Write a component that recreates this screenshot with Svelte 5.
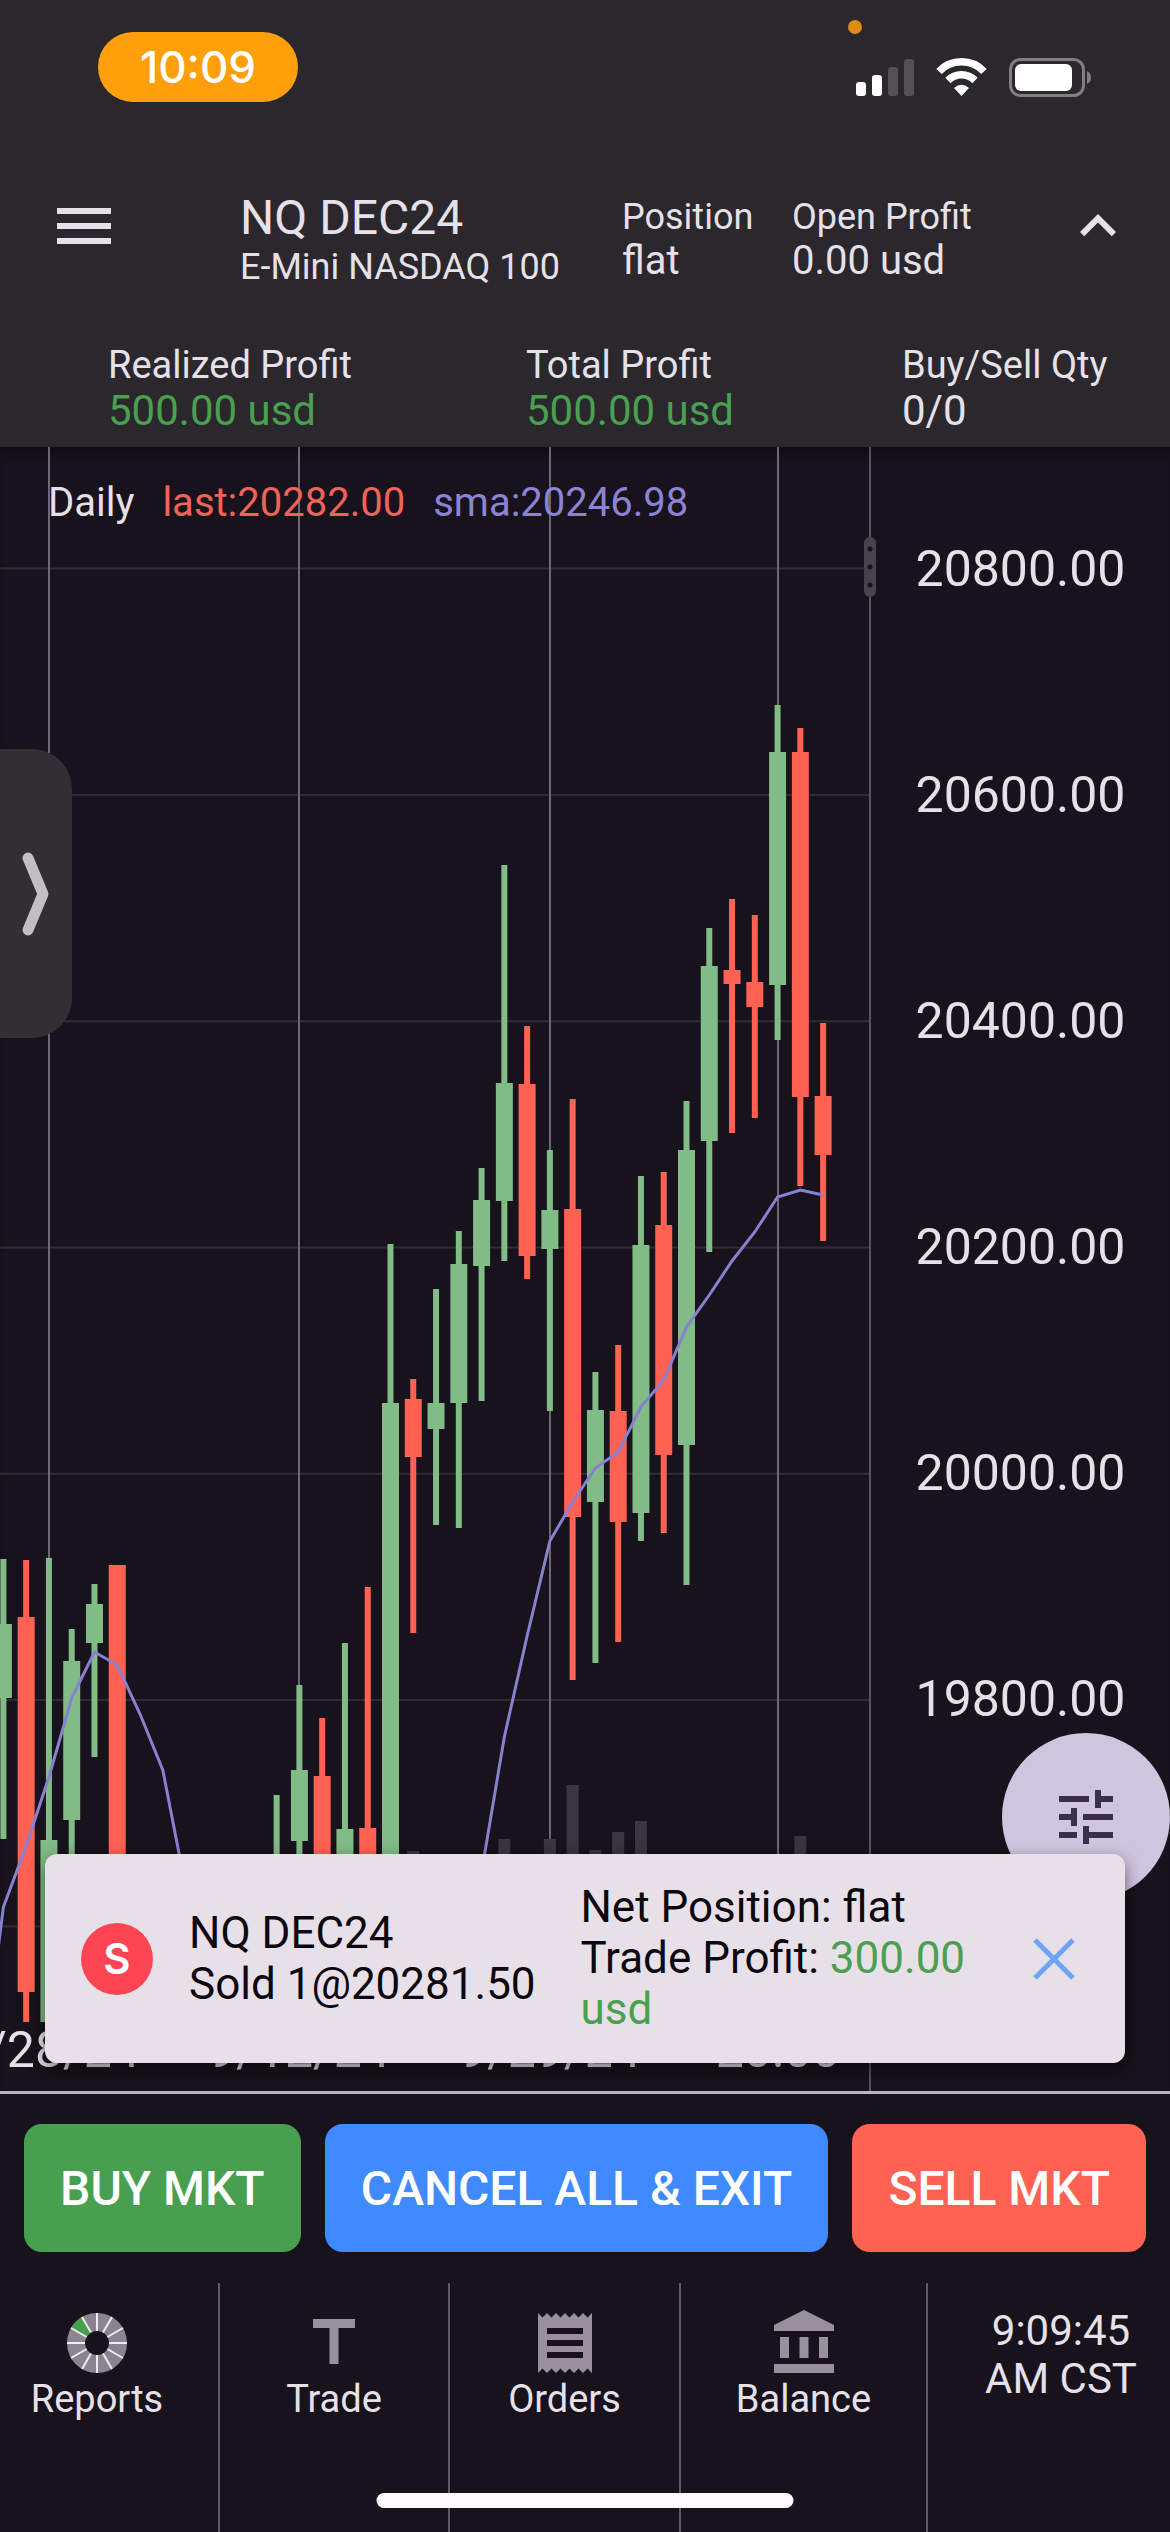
<script>
  let showTrade = true;
  let active = "Trade";

  const prices = [
    "20800.00",
    "20600.00",
    "20400.00",
    "20200.00",
    "20000.00",
    "19800.00",
  ];

  const dates = [
    { x: 49, label: "8/28/24" },
    { x: 299, label: "9/12/24" },
    { x: 550, label: "9/29/24" },
    { x: 778, label: "20:00" },
  ];

  // chart space: one bar every 22.77 units, 200 points every 226.3 units
  const barX = (i) => 3.4 + i * 22.77;
  const rows = [0, 1, 2, 3, 4, 5, 6].map((n) => 121.6 + n * 226.3);

  // [bar, up, high, body top, body bottom, low]
  const candles = [
    [0, 1, 1112, 1177, 1251, 1392],
    [1, 0, 1113, 1170, 1545, 1575],
    [2, 1, 1111, 1393, 1575, 1575],
    [3, 1, 1182, 1214, 1373, 1450],
    [4, 1, 1137, 1157, 1196, 1310],
    [5, 0, 1118, 1118, 1550, 1550],
    [12, 1, 1348, 1430, 1500, 1550],
    [13, 1, 1238, 1323, 1394, 1450],
    [14, 0, 1271, 1329, 1480, 1520],
    [15, 1, 1196, 1382, 1480, 1520],
    [16, 0, 1140, 1381, 1480, 1520],
    [17, 1, 797, 956, 1480, 1520],
    [18, 0, 932, 952, 1010, 1186],
    [19, 1, 842, 956, 982, 1078],
    [20, 1, 784, 817, 956, 1081],
    [21, 1, 721, 753, 819, 954],
    [22, 1, 418, 636, 754, 814],
    [23, 0, 579, 637, 809, 832],
    [24, 1, 703, 763, 802, 964],
    [25, 0, 652, 762, 1070, 1233],
    [26, 1, 925, 963, 1055, 1216],
    [27, 0, 898, 964, 1075, 1195],
    [28, 1, 729, 798, 1066, 1094],
    [29, 0, 725, 778, 1008, 1086],
    [30, 1, 654, 703, 998, 1138],
    [31, 1, 481, 519, 694, 805],
    [32, 0, 452, 523, 537, 686],
    [33, 0, 468, 535, 560, 671],
    [34, 1, 258, 305, 538, 593],
    [35, 0, 281, 305, 650, 739],
    [36, 0, 576, 649, 708, 794],
  ];

  // [bar, top]
  const volumes = [
    [18, 1404],
    [22, 1392],
    [24, 1392],
    [25, 1338],
    [26, 1403],
    [27, 1385],
    [28, 1374],
    [35, 1389],
  ];

  const sma = [
    [-1, 1640],
    [0, 1460],
    [1, 1399],
    [2, 1330],
    [3, 1251],
    [4, 1205],
    [5, 1218],
    [6, 1267],
    [7, 1323],
    [8, 1440],
    [9, 1540],
    [20, 1540],
    [21, 1425],
    [22, 1290],
    [23, 1189],
    [24, 1094],
    [25, 1055],
    [26, 1021],
    [27, 1005],
    [28, 960],
    [29, 933],
    [30, 880],
    [31, 848],
    [32, 814],
    [33, 785],
    [34, 750],
    [35, 743],
    [36, 748],
  ];
  const smaPoints = sma.map(([i, y]) => `${barX(i)},${y}`).join(" ");

  const spokes = [0, 30, 60, 90, 120, 150, 180, 210, 240, 270, 300, 330];
</script>

<div class="app">
  <header>
    <div class="status">
      <span class="clock">10:09</span>
      <i class="rec-dot"></i>
      <svg class="signals" viewBox="0 0 236 40">
        <g fill="#fff">
          <rect x="0" y="24" width="10" height="14" rx="3" />
          <rect x="16" y="17" width="10" height="21" rx="3" />
        </g>
        <g fill="#545057">
          <rect x="32" y="9" width="10" height="29" rx="3" />
          <rect x="48" y="1" width="10" height="37" rx="3" />
        </g>
        <g fill="none" stroke="#fff" stroke-width="7.5">
          <path d="M83 13.500a31 31 0 0 1 45 0" />
          <path d="M92 22.500a19 19 0 0 1 27 0" />
        </g>
        <path d="M98 30q7.500-6.500 15 0l-7.500 8z" fill="#fff" />
        <rect
          x="154.500"
          y="1.500"
          width="73"
          height="36"
          rx="10"
          fill="none"
          stroke="#807d83"
          stroke-width="3"
        />
        <rect x="159" y="6" width="57" height="27" rx="6" fill="#fff" />
        <path d="M231 13q4 2 4 6.500t-4 6.500z" fill="#807d83" />
      </svg>
    </div>

    <div class="top-row">
      <button class="icon-button" aria-label="Menu">
        <svg viewBox="0 0 24 24"
          ><path d="M3 18h18v-2H3v2zm0-5h18v-2H3v2zm0-7v2h18V6H3z" /></svg
        >
      </button>
      <div>
        <h1>NQ DEC24</h1>
        <p class="sub">E-Mini NASDAQ 100</p>
      </div>
      <dl class="stat">
        <dt>Position</dt>
        <dd>flat</dd>
      </dl>
      <dl class="stat">
        <dt>Open Profit</dt>
        <dd>0.00 usd</dd>
      </dl>
      <button class="icon-button" aria-label="Collapse">
        <svg viewBox="0 0 24 24"
          ><path d="M12 8l-6 6 1.410 1.410L12 10.830l4.590 4.580L18 14z" /></svg
        >
      </button>
    </div>

    <div class="profit-row">
      <dl>
        <dt>Realized Profit</dt>
        <dd class="gain">500.00 usd</dd>
      </dl>
      <dl>
        <dt>Total Profit</dt>
        <dd class="gain">500.00 usd</dd>
      </dl>
      <dl>
        <dt>Buy/Sell Qty</dt>
        <dd>0/0</dd>
      </dl>
    </div>
  </header>

  <main>
    <div class="plot">
      <svg viewBox="0 0 869 1644" preserveAspectRatio="xMaxYMin slice">
        {#each rows as y}
          <line x1="0" x2="869" y1={y} y2={y} stroke="#302c34" stroke-width="2" />
        {/each}
        {#each dates as d}
          <line x1={d.x} x2={d.x} y1="0" y2="1575" stroke="#6d6872" stroke-width="2" />
        {/each}
        {#each volumes as [i, y]}
          <rect x={barX(i) - 6} {y} width="12" height={1575 - y} fill="#3a353f" />
        {/each}
        {#each candles as [i, up, high, top, bottom, low]}
          <g fill={up ? "#81bb86" : "#ff6253"}>
            <rect x={barX(i) - 3} y={high} width="6" height={low - high} />
            <rect x={barX(i) - 8.5} y={top} width="17" height={bottom - top} />
          </g>
        {/each}
        <polyline
          points={smaPoints}
          fill="none"
          stroke="#8880d0"
          stroke-width="3"
        />
        {#each dates as d}
          <text x={d.x} y="1620" text-anchor="middle">{d.label}</text>
        {/each}
      </svg>
    </div>

    <div class="axis">
      <i class="grip"></i>
      <ol>
        {#each prices as price}
          <li>{price}</li>
        {/each}
      </ol>
    </div>

    <p class="legend">
      <span>Daily</span>
      <span class="last">last:20282.00</span>
      <span class="sma">sma:20246.98</span>
    </p>

    <button class="drawer" aria-label="Open panel">
      <svg viewBox="0 0 72 90"
        ><path
          d="M28 9l15 36-15 36"
          fill="none"
          stroke="#c1bfc4"
          stroke-width="11"
          stroke-linecap="round"
          stroke-linejoin="round"
        /></svg
      >
    </button>

    <button class="fab" aria-label="Chart settings">
      <svg viewBox="0 0 24 24"
        ><path
          d="M3 17v2h6v-2H3zM3 5v2h10V5H3zm10 16v-2h8v-2h-8v-2h-2v6h2zM7 9v2H3v2h4v2h2V9H7zm14 4v-2H11v2h10zm-6-4h2V7h4V5h-4V3h-2v6z"
        /></svg
      >
    </button>

    {#if showTrade}
      <div class="toast">
        <span class="side">S</span>
        <p>NQ DEC24<br />Sold 1@20281.50</p>
        <p>
          Net Position: flat<br />Trade Profit:
          <span class="gain">300.00 usd</span>
        </p>
        <button
          class="close"
          aria-label="Close"
          on:click={() => (showTrade = false)}
        >
          <svg viewBox="0 0 72 72"
            ><path
              d="M17 17l38 38M55 17L17 55"
              fill="none"
              stroke="#6ea3f8"
              stroke-width="5"
            /></svg
          >
        </button>
      </div>
    {/if}
  </main>

  <div class="actions">
    <button class="buy">BUY MKT</button>
    <button class="cancel">CANCEL ALL &amp; EXIT</button>
    <button class="sell">SELL MKT</button>
  </div>

  <nav>
    <button class="first" on:click={() => (active = "Reports")}>
      <svg viewBox="0 0 72 72">
        <circle cx="36" cy="36" r="21" fill="none" stroke="#8a848e" stroke-width="18" />
        <path d="M10 21A30 30 0 0 1 21 10l9 15.600A12 12 0 0 0 25.600 30z" fill="#46a04d" />
        {#each spokes as angle}
          <line
            x1="36"
            x2="36"
            y1="6"
            y2="24"
            stroke="#f0ebf2"
            stroke-width="2"
            transform="rotate({angle} 36 36)"
          />
        {/each}
      </svg>
      Reports
    </button>
    <button on:click={() => (active = "Trade")}>
      <svg viewBox="0 0 24 24">
        <rect x="5" y="4" width="14" height="3" />
        <rect x="10.500" y="7" width="3" height="12" />
      </svg>
      Trade
    </button>
    <button on:click={() => (active = "Orders")}>
      <svg viewBox="0 0 24 24"
        ><path
          d="M18 17H6v-2h12v2zm0-4H6v-2h12v2zm0-4H6V7h12v2zM3 22l1.500-1.500L6 22l1.500-1.500L9 22l1.500-1.500L12 22l1.500-1.500L15 22l1.500-1.500L18 22l1.500-1.500L21 22V2l-1.500 1.500L18 2l-1.500 1.500L15 2l-1.500 1.500L12 2l-1.500 1.500L9 2 7.500 3.500 6 2 4.500 3.500 3 2v20z"
        /></svg
      >
      Orders
    </button>
    <button on:click={() => (active = "Balance")}>
      <svg viewBox="0 0 24 24"
        ><path
          d="M4 10h3v7H4zM10.500 10h3v7h-3zM17 10h3v7h-3zM2 19h20v3H2zM12 1L2 6v2h20V6z"
        /></svg
      >
      Balance
    </button>
    <time>9:09:45<br />AM CST</time>
    <i class="home-bar"></i>
  </nav>
</div>

<style>
  :global(body) {
    margin: 0;
    background: #17121b;
  }

  .app {
    display: flex;
    flex-direction: column;
    min-height: 100vh;
    color: #e6e0e9;
    font-family: Roboto, "Liberation Sans", sans-serif;
    background: #17121b;
  }

  h1,
  p,
  dl,
  dd,
  ol {
    margin: 0;
    padding: 0;
  }

  button {
    padding: 0;
    border: none;
    color: inherit;
    font-family: inherit;
    background: none;
    cursor: pointer;
  }

  svg {
    display: block;
    fill: currentColor;
  }

  header {
    background: #2a272d;
  }

  .status {
    position: relative;
    display: flex;
    justify-content: space-between;
    align-items: flex-end;
    padding: 32px 78px 88px 98px;
  }

  .clock {
    width: 200px;
    border-radius: 35px;
    color: #fff;
    font-family: Inter, sans-serif;
    font-size: 44px;
    font-weight: 500;
    line-height: 70px;
    text-align: center;
    background: #ffa00a;
  }

  .rec-dot {
    position: absolute;
    top: 20px;
    right: 308px;
    width: 14px;
    height: 14px;
    border-radius: 50%;
    background: #df8b15;
  }

  .signals {
    width: 236px;
    height: 40px;
    margin-bottom: 4px;
  }

  .top-row {
    display: grid;
    grid-template-columns: 192px 382fr 170fr 270fr 72px;
    align-items: center;
    padding: 0 36px 0 48px;
  }

  .icon-button {
    align-self: start;
    width: 72px;
    height: 72px;
  }

  h1 {
    font-size: 48px;
    font-weight: 400;
    line-height: 56px;
  }

  .sub {
    font-size: 36px;
    line-height: 42px;
  }

  .stat dt {
    font-size: 36px;
    line-height: 44px;
  }

  .stat dd {
    font-size: 40px;
    line-height: 44px;
  }

  .profit-row {
    display: grid;
    grid-template-columns: 418fr 376fr 268fr;
    padding: 55px 0 12px 108px;
  }

  .profit-row dt {
    font-size: 38px;
    line-height: 44px;
  }

  .profit-row dd {
    font-size: 42px;
    line-height: 48px;
  }

  .gain {
    color: #4b9f50;
  }

  main {
    position: relative;
    display: grid;
    grid-template-columns: 1fr 301px;
    flex: 1;
    border-bottom: 3px solid #bbb3be;
    box-shadow: inset 0 10px 12px -8px #0c090e;
  }

  .plot {
    display: flex;
    min-height: 900px;
    overflow: hidden;
  }

  .plot svg {
    flex: 1;
    min-width: 0;
    height: 100%;
  }

  .plot text {
    font-size: 50px;
  }

  .axis {
    position: relative;
    border-left: 2px solid #57525c;
  }

  ol {
    padding-top: 9px;
    list-style: none;
    font-size: 50px;
    line-height: 226px;
    text-align: center;
  }

  .grip {
    position: absolute;
    top: 90px;
    left: -7px;
    width: 12px;
    height: 60px;
    border-radius: 6px;
    background: radial-gradient(circle, #17121b 2px, #48434b 3px) 0 3px / 12px 18px;
  }

  .legend {
    position: absolute;
    top: 34px;
    left: 48px;
    display: flex;
    gap: 28px;
    font-size: 40px;
    line-height: 44px;
  }

  .last {
    color: #f0625a;
  }

  .sma {
    color: #8b83d6;
  }

  .drawer {
    position: absolute;
    top: 302px;
    left: 0;
    width: 72px;
    height: 289px;
    border-radius: 0 40px 40px 0;
    background: #312f33;
  }

  .fab {
    position: absolute;
    right: 0;
    bottom: 190px;
    display: grid;
    place-items: center;
    width: 168px;
    height: 168px;
    border-radius: 50%;
    color: #3a2f4c;
    background: #cec5de;
  }

  .fab svg {
    width: 72px;
  }

  .toast {
    position: absolute;
    right: 45px;
    bottom: 28px;
    left: 45px;
    display: grid;
    grid-template-columns: 108px 17fr 19fr 72px;
    align-items: center;
    padding: 28px 35px 28px 36px;
    border-radius: 12px;
    color: #0d0810;
    font-size: 44px;
    line-height: 51px;
    background: #e8e0e9;
    box-shadow: 0 6px 16px rgba(0, 0, 0, 0.5);
  }

  .side {
    width: 72px;
    border-radius: 50%;
    color: #fff;
    font-family: Inter, sans-serif;
    font-size: 42px;
    font-weight: 600;
    line-height: 72px;
    text-align: center;
    background: #ff4454;
  }

  .close {
    width: 72px;
    height: 72px;
  }

  .actions {
    display: flex;
    gap: 24px;
    padding: 30px 24px 31px;
  }

  .actions button {
    flex: 1 1 auto;
    height: 128px;
    border-radius: 18px;
    color: #fff;
    font-size: 48px;
    font-weight: 500;
  }

  .actions .buy {
    background: #499f50;
  }

  .actions .cancel {
    background: #408aff;
  }

  .actions .sell {
    background: #ff6253;
  }

  nav {
    position: relative;
    display: grid;
    grid-template-columns: 220fr 230fr 231fr 247fr 242fr;
    height: 249px;
  }

  nav button,
  nav time {
    padding-top: 24px;
    border-right: 2px solid #5f5a64;
  }

  nav button {
    display: flex;
    flex-direction: column;
    align-items: center;
    font-size: 38px;
    line-height: 40px;
  }

  nav .first {
    padding-right: 24px;
  }

  nav svg {
    width: 72px;
    height: 72px;
    fill: #98919c;
  }

  nav time {
    padding-left: 24px;
    border: none;
    font-size: 42px;
    line-height: 48px;
    text-align: center;
  }

  .home-bar {
    position: absolute;
    bottom: 24px;
    left: 50%;
    width: 417px;
    height: 15px;
    border-radius: 8px;
    background: #fffaff;
    transform: translateX(-50%);
  }
</style>
